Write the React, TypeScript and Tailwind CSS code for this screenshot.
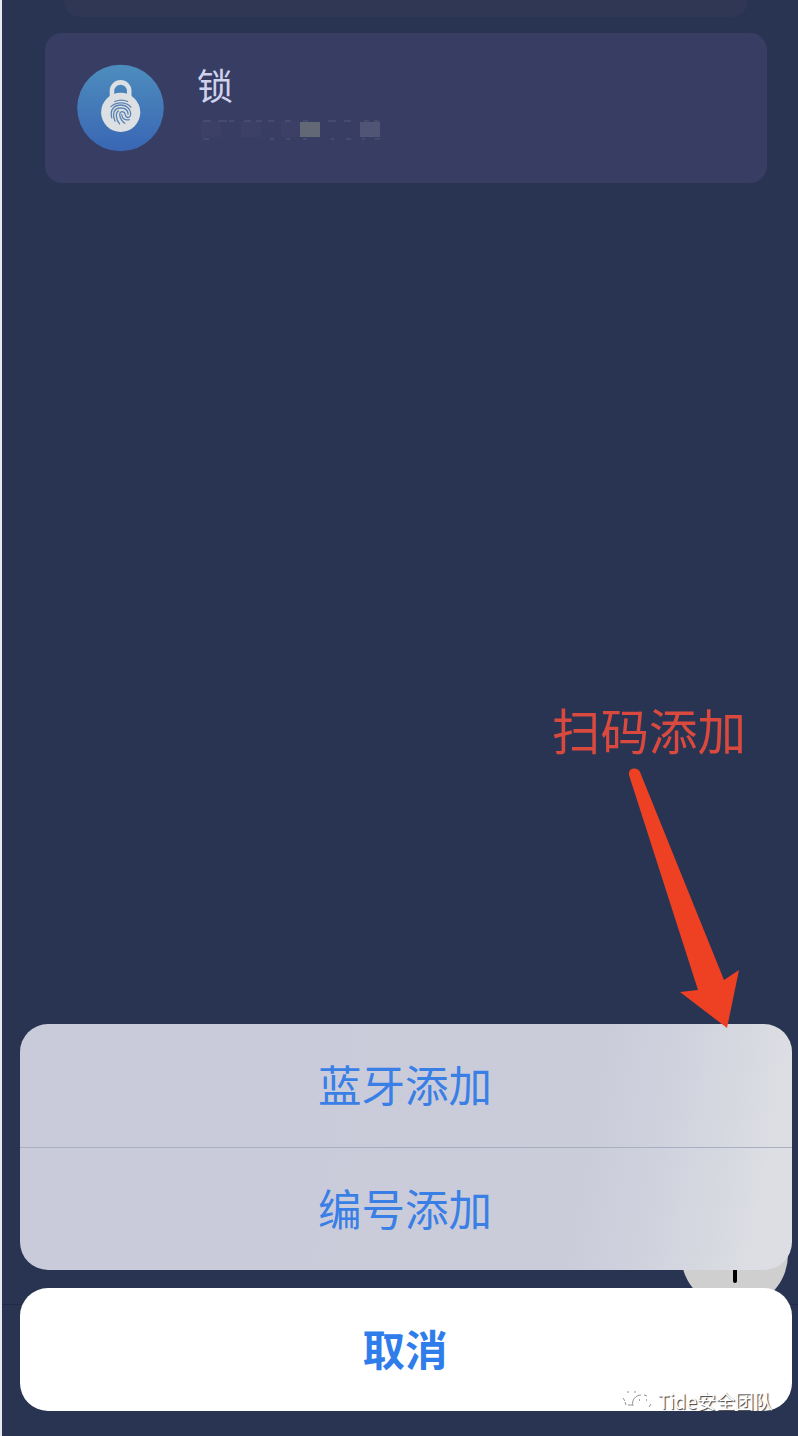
import React from "react";

const cjk = "font-['Noto_Sans_CJK_SC',sans-serif]";

function LockIcon() {
  return (
    <svg className="size-[88px] shrink-0" viewBox="0 0 88 88" fill="none">
      <defs>
        <linearGradient id="disc" x1="0" y1="0" x2="0" y2="1">
          <stop offset="0" stopColor="#4d8dbd" />
          <stop offset="1" stopColor="#3966b4" />
        </linearGradient>
      </defs>
      <circle cx="43.500" cy="44" r="43.300" fill="url(#disc)" />
      <path d="M35 33V27a8.600 8.600 0 0 1 17.200 0V33" stroke="#dce0e2" strokeWidth="4.600" />
      <circle cx="43.700" cy="48.300" r="19.600" fill="#dce0e2" />
      <g transform="translate(30.700 34.500) scale(1.080)" stroke="#5b82b4" strokeWidth="1.200" strokeLinecap="round">
        <path d="M6.500 2.800C10 1.200 15 1.200 18.500 2.800" />
        <path d="M3 7.500C8 2.800 17 2.800 21.500 8" />
        <path d="M3.800 18C1.500 9.500 7 6 12.500 6C18 6 21 10 21.300 14C21.400 17 19 18.500 17.300 17C15.500 15 16.800 12.300 13.300 12.200C9.800 12.200 10.500 19 15.800 23" />
        <path d="M6.800 21C4 14 5.500 8.800 12.300 8.800C17 8.800 18.700 11.500 18.900 14.500" />
        <path d="M11 23.500C7.500 19.500 7 13 10 11.500" />
        <path d="M13 15C13.300 18.500 16 20.500 20 19.500" />
      </g>
    </svg>
  );
}

export default function App() {
  return (
    <main className={`relative flex h-[1436px] w-full flex-col overflow-hidden border-l-2 border-[#e5ebef] bg-[#293452] ${cjk}`}>
      <div className="ml-[62px] h-[17px] w-[684px] shrink-0 rounded-b-[16px] bg-[#303754]" />
      <section className="mt-4 ml-[43px] flex h-[150px] w-[722px] shrink-0 rounded-[17px] bg-[#383d63] pt-[31px] pl-[32px]">
        <LockIcon />
        <div className="ml-[32px] flex flex-col">
          <h1 className="text-[36px] leading-[40px] text-[#cfd2ed]">锁</h1>
          <svg className="mt-[15px] h-[22px] w-[190px]" viewBox="0 0 190 22">
            <path fill="#40446a" d="M44 2h20v16H44zM84 2h19v16H84zM4 2h20v16H4z" opacity=".5" />
            <path fill="#626875" d="M103 3h20v15h-20z" />
            <path fill="#505475" d="M163 3h20v15h-20z" />
            <path d="M6 2h8M21 2h9M32 2h5M47 2h7M59 2h6M71 2h6M88 2h6M106 2h5M131 2h8M147 2h7M167 2h5M177 2h5M6 20h6M73 20h4M89 20h4M106 20h4M134 20h3M149 20h5M165 20h3M178 20h5" stroke="#555a7b" strokeWidth="1" />
          </svg>
        </div>
      </section>

      <p className="mt-[511px] ml-[550px] h-[70px] shrink-0 text-[48.500px] font-normal leading-[70px] whitespace-nowrap text-[#d9493e]">扫码添加</p>

      <div className="absolute top-[1201px] left-[679px] flex size-[107px] justify-center rounded-full bg-[#cfcfcf] pt-[46px]">
        <span className="h-[36px] w-[4px] rounded-sm bg-black" />
      </div>
      <span className="absolute top-[1304px] left-0 h-px w-full bg-[#202a46]" />

      <div className="relative mt-[260px] ml-[18px] flex h-[246px] w-[772px] shrink-0 flex-col overflow-hidden rounded-[28px] bg-[linear-gradient(100deg,#cacbda_0%,#cbccda_72%,#d0d2de_82%,#dcdee3_95%,#dcdee3_100%)]">
        <button className="h-[124px] border-b border-[#a9aec0] pr-[2px] pb-[4px] text-[43.500px] leading-[119px] text-[#397fe6]">蓝牙添加</button>
        <button className="h-[122px] pr-[2px] pb-[2px] text-[43.500px] leading-[120px] text-[#397fe6]">编号添加</button>
      </div>
      <button className="relative mt-[18px] ml-[18px] h-[123px] w-[772px] shrink-0 rounded-[28px] bg-white pr-[2px] pb-[3px] text-[42.500px] leading-[120px] font-bold text-[#2f7deb]">取消</button>

      <svg className="absolute top-[765px] left-[620px] h-[270px] w-[130px]" viewBox="622 765 130 270">
        <path d="M629 775C628 767 638 767 640 772L724 980L739 970L727 1028L680 992L698 990Z" fill="#ee4023" />
      </svg>

      <div className="absolute top-[1387px] left-[618px] flex items-center">
        <svg className="h-[26px] w-[34px]" viewBox="0 0 34 26" fill="none">
          <path d="M6 16L3 20L8 18Q10 19 13 18.500C11 9 20 6 23 7C20 1 4 1 3 9Q3 13 6 16Z" fill="white" />
          <path d="M28 21C37 15 30 7 23 7C14 7 10 15 16 20Q20 23 25 21L29 23Z" fill="white" />
          <path d="M7 4h2M14 4h2M3 10l2 3M5 14l1 3M8 17l4 0M13 18c-2-6 3-11 8-11M24 7l3 1M31 16l-2 3" stroke="#777" strokeWidth=".8" />
          <path d="M19 12h1M26 12h1" stroke="#555" />
        </svg>
        <span className="ml-[4px] text-[19px] leading-[27px] whitespace-nowrap text-white [text-shadow:1px_1px_1px_#333]">Tide安全团队</span>
      </div>
    </main>
  );
}
